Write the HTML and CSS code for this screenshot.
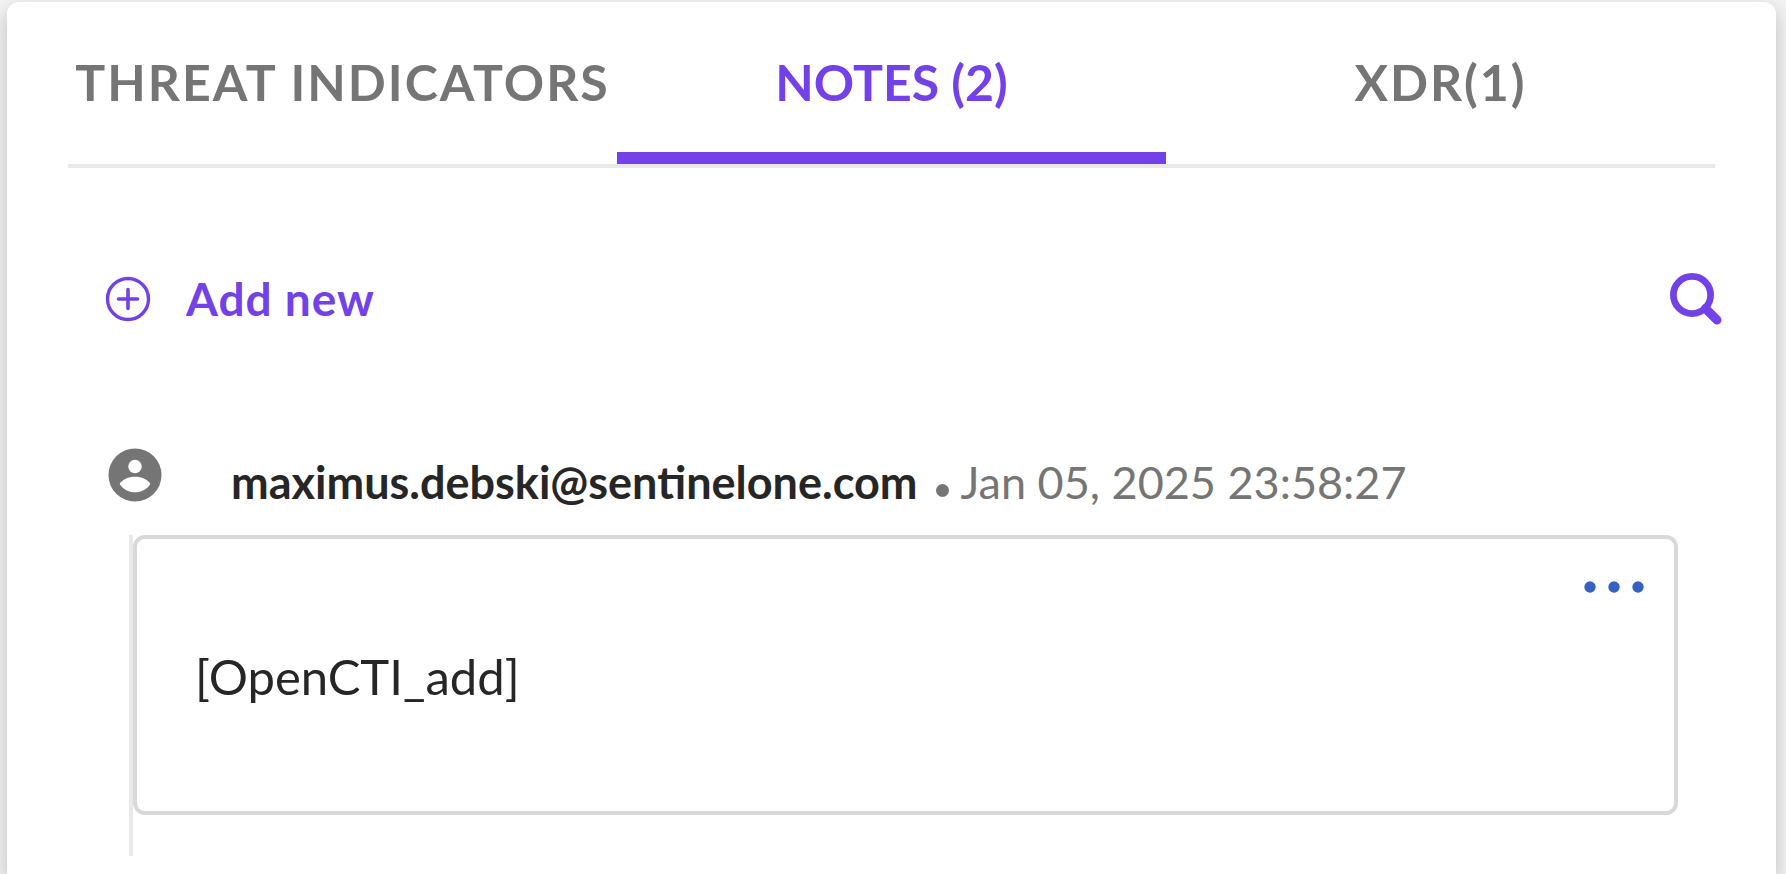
FILE: index.html
```html
<!DOCTYPE html>
<html lang="en">
<head>
<meta charset="utf-8">
<meta name="viewport" content="width=device-width, initial-scale=1">
<title>Notes</title>
<link rel="stylesheet" href="styles.css">
</head>
<body>
<main class="panel">
  <nav class="tabs" role="tablist">
    <button class="tab" type="button" role="tab" aria-selected="false">THREAT INDICATORS</button>
    <button class="tab tab-active" type="button" role="tab" aria-selected="true">NOTES (2)</button>
    <button class="tab" type="button" role="tab" aria-selected="false">XDR(1)</button>
  </nav>
  <div class="toolbar">
    <button class="add-button" type="button">
      <svg class="add-icon" viewBox="0 0 46 46" aria-hidden="true">
        <circle cx="23" cy="23" r="20.5" fill="none" stroke="currentColor" stroke-width="3.4"/>
        <path d="M23 13.5v19M13.500 23h19" fill="none" stroke="currentColor" stroke-width="3.6" stroke-linecap="round"/>
      </svg>
      <span>Add new</span>
    </button>
    <button class="search-button" type="button" aria-label="Search notes">
      <svg class="search-icon" viewBox="0 0 52 52" aria-hidden="true">
        <circle cx="22" cy="22" r="18.600" fill="none" stroke="currentColor" stroke-width="6.800"/>
        <path d="M35.500 35.500L47 47" fill="none" stroke="currentColor" stroke-width="9" stroke-linecap="round"/>
      </svg>
    </button>
  </div>
  <article class="note">
    <header class="note-header">
      <svg class="avatar" viewBox="0 0 54 54" aria-hidden="true">
        <circle cx="27" cy="27" r="26.500" fill="currentColor"/>
        <circle cx="27" cy="18.500" r="6.700" fill="#fff"/>
        <path d="M11.700 36C14 31.500 20.500 28.800 27 28.800S40 31.500 42.300 36C39.500 41 33.500 44.300 27 44.300S14.500 41 11.700 36Z" fill="#fff"/>
      </svg>
      <div class="meta">
        <span class="author">maximus.debski@sentinelone.com</span>
        <span class="separator"></span>
        <time class="date" datetime="2025-01-05T23:58:27">Jan 05, 2025 23:58:27</time>
      </div>
    </header>
    <div class="thread">
      <div class="note-card">
        <button class="more-button" type="button" aria-label="More actions">
          <svg class="more-icon" viewBox="0 0 60 12" aria-hidden="true">
            <circle cx="6" cy="6" r="5.700" fill="currentColor"/>
            <circle cx="30" cy="6" r="5.700" fill="currentColor"/>
            <circle cx="54" cy="6" r="5.700" fill="currentColor"/>
          </svg>
        </button>
        <p class="note-text">[OpenCTI_add]</p>
      </div>
    </div>
  </article>
</main>
</body>
</html>
```
FILE: styles.css
```css
* {
  box-sizing: border-box;
}

body {
  margin: 0;
  padding: 2px 10px 0 7px;
  min-height: 100vh;
  display: flex;
  overflow: hidden;
  background: #f2f2f2;
  color: #262626;
  font-family: Lato, "Open Sans", sans-serif;
}

button {
  margin: 0;
  padding: 0;
  border: 0;
  background: none;
  color: inherit;
  font: inherit;
  cursor: pointer;
}

svg {
  display: block;
}

.panel {
  flex: 1;
  padding: 0 61px;
  border-radius: 12px 12px 0 0;
  background: #fff;
  box-shadow: 0 8px 20px rgba(0, 0, 0, 0.22);
}

.tabs {
  display: grid;
  grid-template-columns: repeat(3, minmax(0, 1fr));
  border-bottom: 4px solid #e9e9e9;
}

.tab {
  height: 162px;
  border-top: 12px solid transparent;
  border-bottom: 12px solid transparent;
  padding-bottom: 2px;
  color: #757575;
  font-size: 50px;
  font-weight: 700;
  line-height: 60px;
  letter-spacing: 2px;
  white-space: nowrap;
}

.tab-active {
  border-bottom-color: #7242e8;
  color: #7242e8;
  letter-spacing: normal;
}

.toolbar {
  display: flex;
  align-items: center;
  justify-content: space-between;
  padding: 101px 0 0 37px;
  margin-right: -7px;
  color: #7242e8;
}

.add-button {
  display: flex;
  align-items: center;
  gap: 35px;
  font-size: 46px;
  font-weight: 700;
  line-height: 60px;
  letter-spacing: 1px;
}

.add-icon {
  width: 46px;
  height: 46px;
}

.search-icon {
  width: 52px;
  height: 52px;
}

.note {
  padding: 119px 37px 0 40px;
}

.note-header {
  display: flex;
  gap: 69px;
  height: 87px;
  color: #757575;
}

.avatar {
  width: 54px;
  height: 54px;
}

.meta {
  display: flex;
  align-items: center;
  height: 68px;
  font-size: 45px;
  line-height: 56px;
  white-space: nowrap;
}

.author {
  color: #262626;
  font-weight: 700;
}

.separator {
  width: 13px;
  height: 13px;
  margin: 16px 12px 0 18px;
  border-radius: 50%;
  background: #757575;
}

.thread {
  margin-left: 21px;
  padding-bottom: 41px;
  border-left: 4px solid #e9e9e9;
}

.note-card {
  display: flex;
  flex-direction: column;
  padding: 42px 30px 106px 58px;
  border: 4px solid #d9d9d9;
  border-radius: 12px;
}

.more-button {
  align-self: flex-end;
  color: #3661c4;
}

.more-icon {
  width: 60px;
  height: 12px;
}

.note-text {
  margin: 54px 0 0;
  font-size: 49px;
  line-height: 58px;
}
```
